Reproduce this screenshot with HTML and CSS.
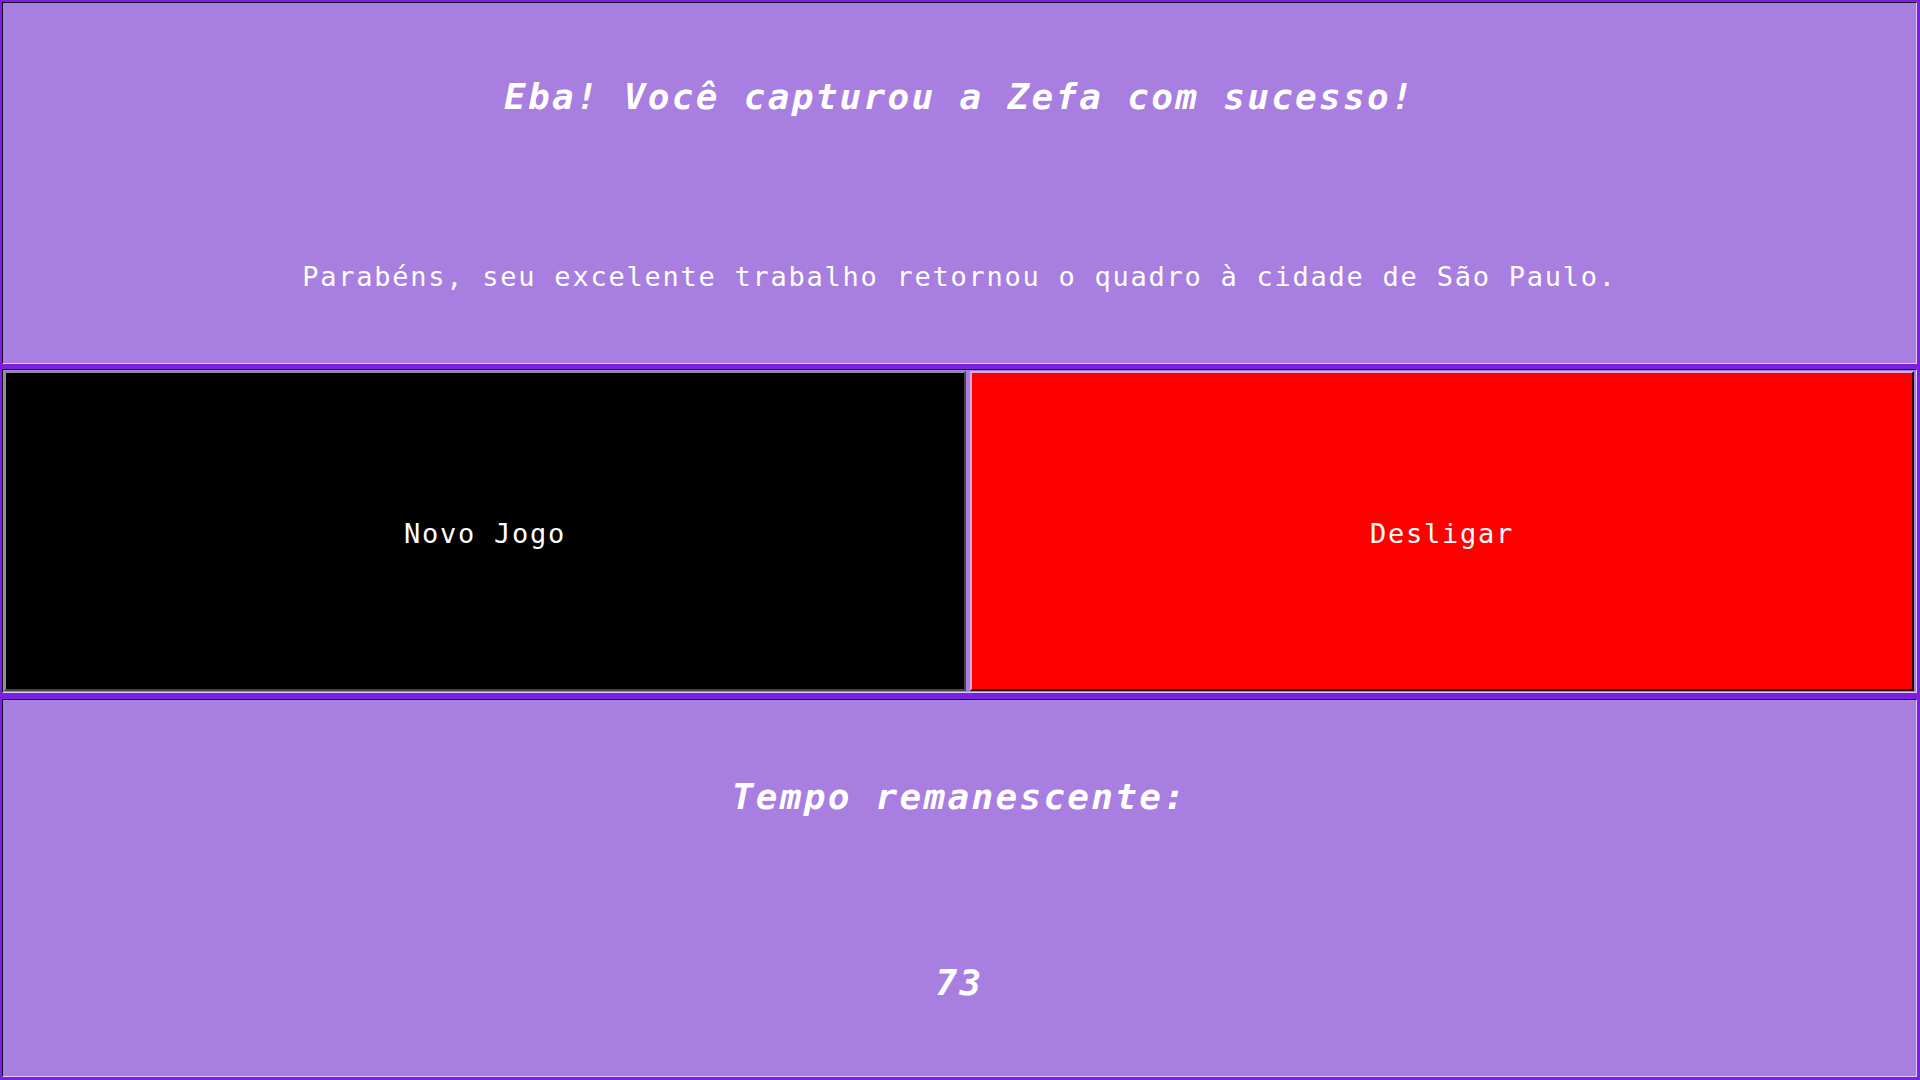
FILE: index.html
```html
<!DOCTYPE html>
<html lang="pt-BR">
<head>
<meta charset="utf-8">
<title>Zefa</title>
<link rel="stylesheet" href="styles.css">
</head>
<body>
<main class="screen">
  <section class="panel panel-top">
    <h1 class="title">Eba! Você capturou a Zefa com sucesso!</h1>
    <p class="message">Parabéns, seu excelente trabalho retornou o quadro à cidade de São Paulo.</p>
  </section>
  <section class="panel panel-actions">
    <button class="btn btn-new">Novo Jogo</button>
    <button class="btn btn-off">Desligar</button>
  </section>
  <section class="panel panel-timer">
    <h2 class="title">Tempo remanescente:</h2>
    <div class="title timer-value">73</div>
  </section>
</main>
</body>
</html>
```
FILE: styles.css
```css
html, body {
  margin: 0;
  padding: 0;
  height: 100%;
}

body {
  background: #7b1fe0;
  font-family: "DejaVu Sans Mono", "Liberation Mono", monospace;
  color: #ffffff;
}

.screen {
  box-sizing: border-box;
  height: 1080px;
  padding: 2px 3px 3px 2px;
  display: flex;
  flex-direction: column;
  gap: 5px;
}

.panel {
  box-sizing: border-box;
  background: #a87ee1;
  border-style: solid;
  border-width: 1px;
  border-color: #0c0418 #dccbf6 #dccbf6 #0c0418;
}

.panel-top {
  height: 362px;
  display: flex;
  flex-direction: column;
  justify-content: space-around;
  align-items: center;
}

.panel-timer {
  height: 378px;
  margin-top: 1px;
  padding-top: 4px;
  display: flex;
  flex-direction: column;
  justify-content: space-around;
  align-items: center;
}

.title {
  margin: 0;
  font-size: 36px;
  line-height: 48px;
  font-weight: bold;
  font-style: italic;
  letter-spacing: 2.3px;
  text-align: center;
}

.message {
  margin: 0;
  font-size: 27px;
  line-height: 32px;
  letter-spacing: 1.75px;
  text-align: center;
}

.panel-actions {
  height: 325px;
  padding: 1px 2px 1px 1px;
  display: flex;
  gap: 4px;
}

.btn {
  flex: 1 1 auto;
  margin: 0;
  padding: 4px 8px 0;
  font-family: inherit;
  font-size: 27px;
  letter-spacing: 1.75px;
  color: #ffffff;
  border-width: 2px;
  border-style: solid;
  cursor: pointer;
}

.btn-new {
  background: #000000;
  border-color: #8e8e8e #454545 #454545 #8e8e8e;
}

.btn-off {
  background: #ff0000;
  border-color: #d9a6e8 #2a0000 #2a0000 #d9a6e8;
}
```
